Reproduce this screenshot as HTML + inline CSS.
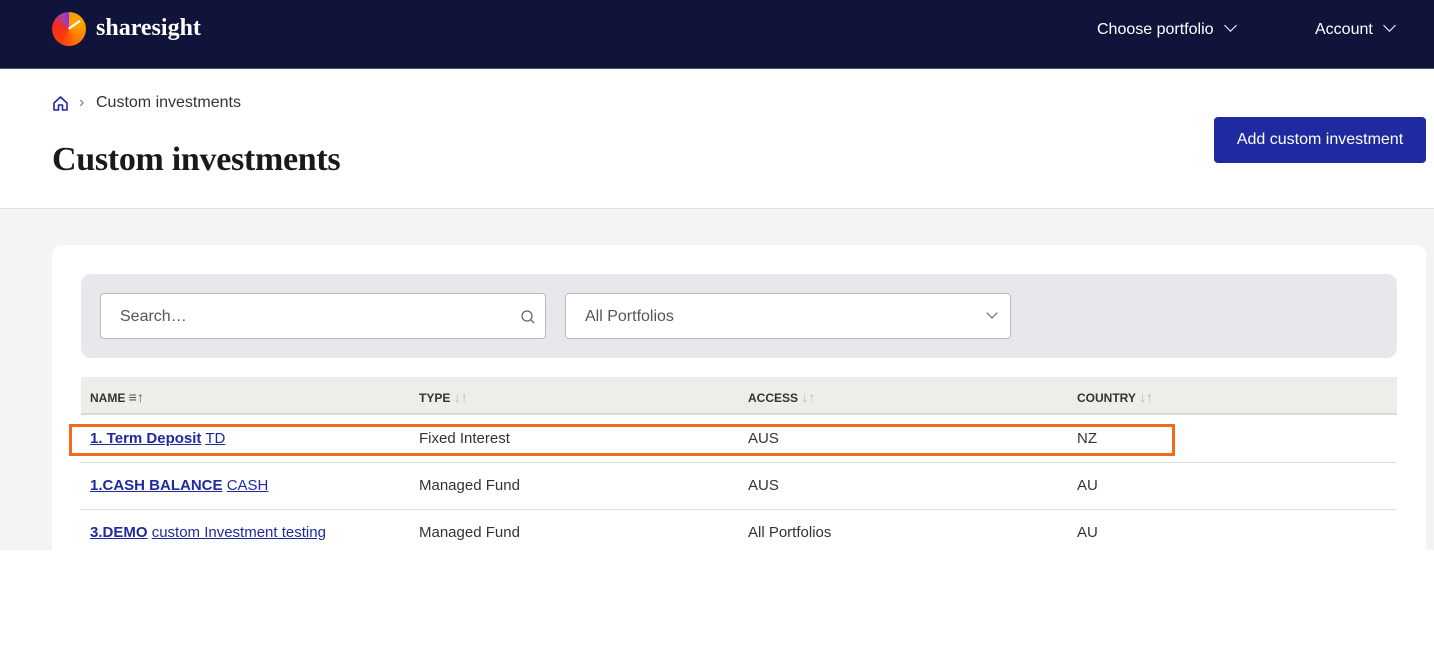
<!DOCTYPE html>
<html><head><style>
*{box-sizing:border-box;margin:0;padding:0}
body{width:1434px;height:658px;background:#fff;font-family:"Liberation Sans",sans-serif;position:relative;overflow:hidden;color:#222}
.nav{position:absolute;left:0;top:0;width:1434px;height:69px;background:#11143a;border-bottom:1px solid #555}
.logo{position:absolute;left:52px;top:12px;width:34px;height:34px;border-radius:50%;background:conic-gradient(from 0deg,#ff9a00 0deg,#f5a800 60deg,#ff7a00 140deg,#ff3a10 220deg,#f02a20 290deg,#a040c0 340deg,#8a2be2 360deg)}
.logo:after{content:"";position:absolute;left:16px;top:16px;width:14px;height:1.5px;background:#fff;transform-origin:0 0;transform:rotate(-35deg)}
.brand{position:absolute;left:96px;top:15px;color:#fff;font-family:"Liberation Serif",serif;font-weight:bold;font-size:24px}
.navr{position:absolute;top:21px;color:#fff;font-size:16px}
.chev{display:inline-block;width:9px;height:9px;border-right:1.5px solid #fff;border-bottom:1.5px solid #fff;transform:rotate(45deg);margin-left:12px;position:relative;top:-4px}
.crumb{position:absolute;left:52px;top:94px;font-size:16px;color:#333}
h1{position:absolute;left:52px;top:141px;font-family:"Liberation Serif",serif;font-size:34px;font-weight:bold;color:#1a1a1a;letter-spacing:-0.3px}
.btn{position:absolute;left:1214px;top:117px;width:212px;height:46px;background:#1f2aa0;color:#fff;border-radius:4px;font-size:16px;text-align:center;line-height:46px}
.bg{position:absolute;left:0;top:208px;width:1434px;height:342px;background:#f4f4f6;border-top:1px solid #ddd}
.card{position:absolute;left:52px;top:245px;width:1374px;height:305px;background:#fff;border-radius:10px 10px 0 0}
.filt{position:absolute;left:81px;top:274px;width:1316px;height:84px;background:#e8e8ec;border-radius:10px}
.inp{position:absolute;top:293px;height:46px;background:#fff;border:1px solid #bbb;border-radius:4px;font-size:16px;color:#555;padding:14px 19px}
.th{position:absolute;left:81px;top:377px;width:1316px;height:38px;background:#eeedea;border-bottom:2px solid #d8d8d8}
.h{position:absolute;top:389px;font-size:12px;font-weight:bold;color:#333}
.h span{color:#bbb;font-weight:normal;font-size:14px}
.c{position:absolute;font-size:15px;color:#333}
a{color:#1f2aa0;text-decoration:underline}
.line{position:absolute;left:81px;width:1316px;height:1px;background:#ddd}
.hl{position:absolute;left:69px;top:424px;width:1106px;height:32px;border:3px solid #f26b1d}
</style></head><body>
<div class="nav"><div class="logo"></div><div class="brand">sharesight</div>
<div class="navr" style="left:1097px">Choose portfolio<span class="chev"></span></div>
<div class="navr" style="left:1315px">Account<span class="chev"></span></div></div>
<div class="crumb"><svg width="17" height="17" viewBox="0 0 17 17" style="position:absolute;left:0;top:1px"><path d="M2 8 L8.5 2 L15 8 V15 H10.5 V10 H6.5 V15 H2 Z" fill="none" stroke="#1f2aa0" stroke-width="1.6" stroke-linejoin="round"/></svg><span style="position:absolute;left:27px;color:#777">›</span><span style="position:absolute;left:44px;white-space:nowrap">Custom investments</span></div>
<h1>Custom investments</h1>
<div class="btn">Add custom investment</div>
<div class="bg"></div><div class="card"></div><div class="filt"></div>
<div class="inp" style="left:100px;width:446px">Search…<svg width="16" height="16" viewBox="0 0 16 16" style="position:absolute;right:9px;top:15px"><circle cx="7" cy="7" r="5" fill="none" stroke="#666" stroke-width="1.3"/><path d="M10.6 10.6 L14 14" stroke="#666" stroke-width="1.3"/></svg></div>
<div class="inp" style="left:565px;width:446px">All Portfolios<span style="position:absolute;right:14px;top:15px;width:8px;height:8px;border-right:1.5px solid #555;border-bottom:1.5px solid #555;transform:rotate(45deg)"></span></div>
<div class="th"></div>
<div class="h" style="left:90px">NAME <span style="color:#555">≡↑</span></div>
<div class="h" style="left:419px">TYPE <span>↓↑</span></div>
<div class="h" style="left:748px">ACCESS <span>↓↑</span></div>
<div class="h" style="left:1077px">COUNTRY <span>↓↑</span></div>
<div class="c" style="left:90px;top:430px"><a><b>1. Term Deposit</b></a> <a>TD</a></div>
<div class="c" style="left:419px;top:430px">Fixed Interest</div><div class="c" style="left:748px;top:430px">AUS</div><div class="c" style="left:1077px;top:430px">NZ</div>
<div class="line" style="top:462px"></div>
<div class="c" style="left:90px;top:477px"><a><b>1.CASH BALANCE</b></a> <a>CASH</a></div>
<div class="c" style="left:419px;top:477px">Managed Fund</div><div class="c" style="left:748px;top:477px">AUS</div><div class="c" style="left:1077px;top:477px">AU</div>
<div class="line" style="top:509px"></div>
<div class="c" style="left:90px;top:524px"><a><b>3.DEMO</b></a> <a>custom Investment testing</a></div>
<div class="c" style="left:419px;top:524px">Managed Fund</div><div class="c" style="left:748px;top:524px">All Portfolios</div><div class="c" style="left:1077px;top:524px">AU</div>
<div class="hl"></div>
<div style="position:absolute;left:0;top:550px;width:1434px;height:108px;background:#fff"></div>
</body></html>
